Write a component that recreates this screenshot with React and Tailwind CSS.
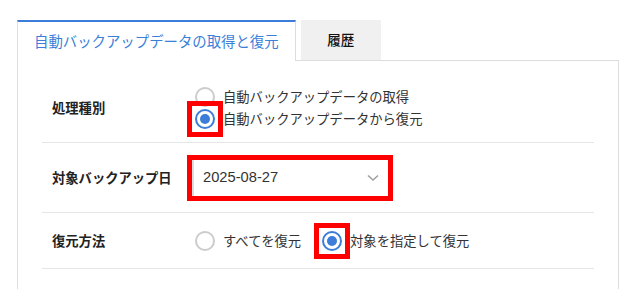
import React from "react";

const jp = { fontFamily: '"Noto Sans CJK JP", "Noto Sans", sans-serif' };

function Radio({ checked, marked }) {
  return (
    <span
      className={`inline-flex shrink-0 ${
        marked ? "outline-[5px] outline-solid outline-offset-[3px] outline-[#ff0000]" : ""
      }`}
    >
      <span
        className={`inline-flex items-center justify-center w-[20px] h-[20px] rounded-full border-2 bg-white ${
          checked ? "border-[#3b7dd8]" : "border-[#cccccc]"
        }`}
      >
        {checked && <span className="w-[10px] h-[10px] rounded-full bg-[#3b7dd8]" />}
      </span>
    </span>
  );
}

function Option({ checked, marked, label }) {
  return (
    <label className="flex items-center gap-[8px] h-[22px] ml-[3px] cursor-pointer">
      <Radio checked={checked} marked={marked} />
      <span className="text-[13.3px] text-[#333] leading-none">{label}</span>
    </label>
  );
}

function Row({ label, height, children }) {
  return (
    <div className={`flex items-center border-b border-[#e6e6e6] px-[10px] ${height}`}>
      <div className="w-[140px] shrink-0 text-[13.3px] font-bold text-[#222] leading-none">
        {label}
      </div>
      <div className="flex-1">{children}</div>
    </div>
  );
}

export default function App() {
  return (
    <div className="bg-white w-[634px] h-[289px] overflow-hidden pt-5 pl-[17px]" style={jp}>
      <div className="flex items-end gap-[5px]">
        <div className="relative z-10 -mb-px h-[41px] bg-white border-t-2 border-t-[#3b7dd8] border-l border-r border-[#dddddd] px-4 flex items-center">
          <span className="text-[14.4px] text-[#3a7fd8] leading-none">
            自動バックアップデータの取得と復元
          </span>
        </div>
        <div className="h-10 w-[80px] bg-[#f0f0f0] flex items-center justify-center">
          <span className="text-[13.5px] font-medium text-[#111] leading-none">履歴</span>
        </div>
      </div>

      <div className="w-[602px] h-[240px] border border-[#dddddd] pt-3 px-6">
        <Row label="処理種別" height="h-[70px]">
          <div className="flex flex-col">
            <Option label="自動バックアップデータの取得" />
            <Option checked marked label="自動バックアップデータから復元" />
          </div>
        </Row>

        <Row label="対象バックアップ日" height="h-[70px]">
          <div className="w-[196px] h-[36px] bg-white border-l-2 border-[#dddddd] outline-[5px] outline-solid outline-[#ff0000] flex items-center justify-between pl-[9px] pr-[9px]">
            <span
              className="text-[14.7px] text-[#333] leading-none"
              style={{ fontFamily: '"Liberation Sans", Arial, sans-serif' }}
            >
              2025-08-27
            </span>
            <svg width="12" height="8" viewBox="0 0 12 8" fill="none">
              <path d="M1 1.5 L6 6 L11 1.5" stroke="#a0a0a0" strokeWidth="1.6" />
            </svg>
          </div>
        </Row>

        <Row label="復元方法" height="h-[56px]">
          <div className="flex items-center gap-[18px]">
            <Option label="すべてを復元" />
            <Option checked marked label="対象を指定して復元" />
          </div>
        </Row>
      </div>
    </div>
  );
}
